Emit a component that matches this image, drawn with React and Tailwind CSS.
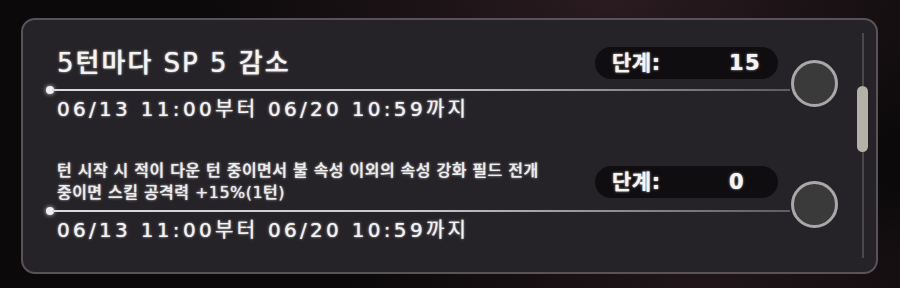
import React from 'react';

const FONT = "font-['DejaVu_Sans','Noto_Sans_CJK_KR',sans-serif]";
const GLOW = '[text-shadow:0_0_3px_rgba(255,255,255,0.55),0_0_1px_rgba(255,255,255,0.8)]';

const DotLine = () => (
  <div className="flex items-center h-[8px]">
    <div className="w-[8px] h-[8px] rounded-full bg-[#f1eef0] shadow-[0_0_4px_rgba(255,255,255,0.8)] shrink-0" />
    <div className="flex-1 h-[2px] -ml-[2px] bg-gradient-to-r from-[#dcdadc] via-[#c8c6c8] to-[#5f5c60]" />
  </div>
);

const Stage = ({ value }) => (
  <div className="flex items-center w-[183px] h-[32px] rounded-full bg-[#0f0d0f] pl-[17px] shrink-0">
    <span className={`w-[117px] text-[21px] leading-none font-bold tracking-[0.5px] text-[#f4f4f4] ${GLOW}`}>단계:</span>
    <span className={`text-[21px] leading-none font-bold tracking-[1.5px] text-[#f4f4f4] ${GLOW}`}>{value}</span>
  </div>
);

const Radio = () => (
  <div className="w-[47px] h-[47px] rounded-full border-[3px] border-[#aaa7a9] bg-[#3b3a3b] shrink-0" />
);

const DateText = () => (
  <div className={`pl-[11px] mt-[3px] text-[20px] leading-[24px] tracking-[3.3px] text-[#f2f2f2] ${GLOW}`}>
    06/13 11:00부터 06/20 10:59까지
  </div>
);

export default function App() {
  return (
    <div className={`w-[900px] h-[288px] pt-[18px] pl-[21px] bg-[#0b090a] bg-[radial-gradient(ellipse_420px_180px_at_68%_0%,#2a1b20,transparent),radial-gradient(ellipse_360px_120px_at_78%_100%,#22161a,transparent)] ${FONT}`}>
      <div className="w-[857px] h-[256px] rounded-[14px] border-2 border-[#5a5259] bg-[#252327] flex">
        {/* list */}
        <div className="flex flex-col pl-[23px]">
          {/* row 1 */}
          <div className="flex items-start">
            <div className="w-[744px] flex flex-col">
              <div className="mt-[27px] h-[32px] flex items-center justify-between pl-[11px] pr-[12px]">
                <span className={`text-[26px] leading-none font-medium tracking-[2px] text-[#f3f3f3] ${GLOW}`}>5턴마다 SP 5 감소</span>
                <Stage value="15" />
              </div>
              <div className="mt-[7px]">
                <DotLine />
              </div>
              <DateText />
            </div>
            <div className="mt-[40px] ml-[1px]">
              <Radio />
            </div>
          </div>
          {/* row 2 */}
          <div className="flex items-start mt-[39px]">
            <div className="w-[744px] flex flex-col">
              <div className="h-[44px] flex items-center justify-between pl-[11px] pr-[12px]">
                <p className={`text-[16px] leading-[22px] font-medium tracking-[0.45px] text-[#ececec] ${GLOW}`}>
                  턴 시작 시 적이 다운 턴 중이면서 불 속성 이외의 속성 강화 필드 전개
                  <br />
                  중이면 스킬 공격력 +15%(1턴)
                </p>
                <Stage value="0" />
              </div>
              <div className="mt-[3px]">
                <DotLine />
              </div>
              <DateText />
            </div>
            <div className="mt-[21px] ml-[1px]">
              <Radio />
            </div>
          </div>
        </div>
        {/* scrollbar */}
        <div className="ml-[19px] mt-[13px] w-[11px] h-[225px] flex flex-col items-center">
          <div className="w-[2px] h-[53px] bg-[#4d474d]" />
          <div className="w-[11px] h-[66px] rounded-full bg-[#b4b2a6]" />
          <div className="w-[2px] flex-1 bg-[#4d474d]" />
        </div>
      </div>
    </div>
  );
}
